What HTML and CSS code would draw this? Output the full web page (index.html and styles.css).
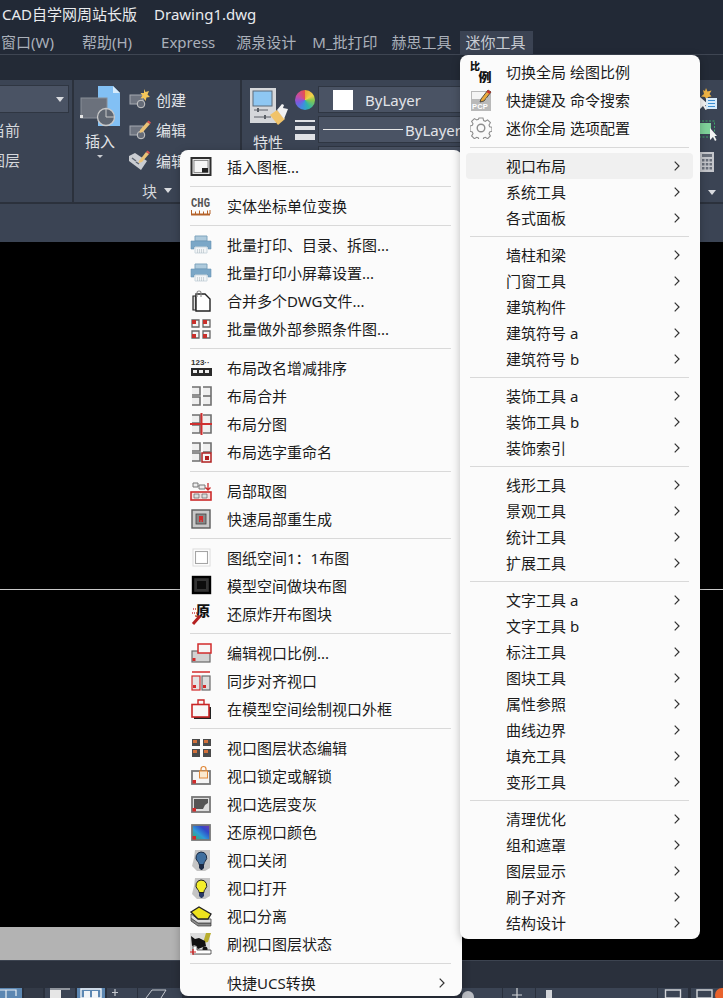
FILE: index.html
```html
<!DOCTYPE html>
<html lang="zh">
<head>
<meta charset="utf-8">
<title>CAD Drawing1.dwg</title>
<link rel="stylesheet" href="styles.css">
</head>
<body>
<svg class="defs" aria-hidden="true">
  <symbol id="chev" viewBox="0 0 6 10"><path d="M.7.7 5 5 .7 9.3" fill="none" stroke="#333" stroke-width="1.2"/></symbol>
  <symbol id="i-gear" viewBox="0 0 22 22"><path d="M9 1h4l.6 2.600 1.700.7 2.300-1.400 2.800 2.800-1.400 2.300.7 1.700 2.300.6v4l-2.300.6-.7 1.700 1.400 2.300-2.800 2.800-2.300-1.400-1.700.7-.6 2.300H9l-.6-2.300-1.700-.7-2.300 1.400-2.800-2.800 1.400-2.300-.7-1.700-2.300-.6V9l2.300-.6.7-1.700-1.400-2.300 2.800-2.800 2.300 1.400 1.700-.7z" fill="#fafafa" stroke="#8d8d8d" stroke-width="1.100"/><circle cx="11" cy="11" r="3.800" fill="none" stroke="#8d8d8d" stroke-width="1.400"/></symbol>

  <symbol id="i-frame" viewBox="0 0 22 22"><rect x="1.500" y="2" width="19" height="17" fill="#e6e6e6" stroke="#2e2e2e" stroke-width="2"/><rect x="4" y="4.500" width="14" height="12" fill="#f5f5f5" stroke="#777" stroke-width=".8"/><rect x="12" y="12" width="6" height="4.500" fill="#222"/></symbol>
  <symbol id="i-print" viewBox="0 0 22 22"><path d="M5 2h12v5H5z" fill="#aecadc" stroke="#7fa4bd"/><path d="M1 7h20v8h-3v-2H4v2H1z" fill="#7ba7c7" stroke="#6a95b6" stroke-width=".6"/><path d="M5 13h12v6H5z" fill="#f2f5f7" stroke="#cdd8df"/><path d="M7 16h8M7 18h8" stroke="#a9b5bd" stroke-dasharray="1 1"/></symbol>
  <symbol id="i-clip" viewBox="0 0 22 22"><path d="M3 6h3v14H3z" fill="#ddd" stroke="#222" stroke-width="1.200"/><path d="M6 4h9l5 5v12H6z" fill="#fff" stroke="#222" stroke-width="1.400"/><path d="M7 7V3a2 2 0 0 1 4 0v4" fill="none" stroke="#888" stroke-width="1.100"/></symbol>
  <symbol id="i-grid" viewBox="0 0 22 22"><path d="M2 2h7v7H2zM13 2h7v7h-7zM2 13h7v7H2zM13 13h7v7h-7z" fill="#f3f3f3" stroke="#666" stroke-width="1.300"/><path d="M2 6h4V2H2zM13 6h4V2h-4zM2 20h4v-4H2zM13 20h4v-4h-4z" fill="#c9302c"/></symbol>
  <symbol id="i-merge2" viewBox="0 0 22 22"><path d="M2 2h8v8H2M13 2h8v18h-8M2 12h8v8H2" fill="#efefef" stroke="#6f6f6f" stroke-width="1.600"/><path d="M13 11h8" stroke="#6f6f6f" stroke-width="1.600"/></symbol>
  <symbol id="i-split" viewBox="0 0 22 22"><path d="M2 2h8v8H2M13 2h8v18h-8M2 12h8v8H2" fill="#efefef" stroke="#6f6f6f" stroke-width="1.600"/><path d="M11.500 0v22M0 11h22" stroke="#cf2f2f" stroke-width="2"/></symbol>
  <symbol id="i-rename" viewBox="0 0 22 22"><path d="M2 2h8v8H2M13 2h8v9h-8M2 12h8v8H2" fill="#efefef" stroke="#6f6f6f" stroke-width="1.600"/><rect x="12" y="12" width="9" height="9" fill="#f6f6f6" stroke="#b02020" stroke-width="1.500"/><rect x="15" y="15" width="4" height="4" fill="#b02020"/></symbol>
  <symbol id="i-part" viewBox="0 0 22 22"><path d="M3 3h5v4H3zM9 5h6v4H9z" fill="#eee" stroke="#777"/><path d="M18 3v7m-2.500-2.500L18 10l2.500-2.500" fill="none" stroke="#cc2b2b" stroke-width="1.300"/><rect x="1" y="12" width="20" height="8" fill="#f4dede" stroke="#cc2b2b" stroke-width="1.600"/><path d="M4 14h5v4H4zM12 14h5v4h-5z" fill="#ddd" stroke="#666" stroke-width=".7"/></symbol>
  <symbol id="i-regen" viewBox="0 0 22 22"><rect x="2" y="2" width="18" height="18" fill="#c9c9c9" stroke="#5c5c5c" stroke-width="1.400"/><rect x="6" y="6" width="10" height="10" fill="#888" stroke="#444" stroke-width=".8"/><path d="M9 8h4v6h-1.500v-2H10.500v2H9z" fill="#d52c2c"/></symbol>
  <symbol id="i-paper" viewBox="0 0 22 22"><rect x="3" y="2" width="17" height="17" fill="#fff" stroke="#dcdcdc"/><rect x="5.500" y="4.500" width="12" height="12" fill="#fff" stroke="#a5a5a5" stroke-width="1.100"/></symbol>
  <symbol id="i-model" viewBox="0 0 22 22"><rect x="3" y="2" width="17" height="16" fill="#333" stroke="#000" stroke-width="2.400"/><rect x="7" y="6" width="9" height="8" fill="#0c0c0c"/></symbol>
  <symbol id="i-scale" viewBox="0 0 22 22"><rect x="2" y="9" width="18" height="11" fill="#d2d2d2" stroke="#6a6a6a" stroke-width="1.200"/><rect x="8" y="2" width="13" height="9" fill="#f7f7f7" stroke="#d22b2b" stroke-width="1.500"/><rect x="2.500" y="16" width="3" height="3" fill="#d22b2b"/></symbol>
  <symbol id="i-sync" viewBox="0 0 22 22"><path d="M2 2h18" stroke="#d22b2b" stroke-width="1.500"/><rect x="2" y="6" width="8" height="14" fill="#e3e3e3" stroke="#d22b2b" stroke-width="1.200"/><rect x="12" y="6" width="8" height="14" fill="#dcdcdc" stroke="#6a6a6a" stroke-width="1.200"/><rect x="3" y="15" width="3" height="3" fill="#d22b2b"/><rect x="13" y="15" width="3" height="3" fill="#d22b2b"/></symbol>
  <symbol id="i-draw" viewBox="0 0 22 22"><path d="M8 7V2h6l0 5" fill="#f8f8f8" stroke="#c92525" stroke-width="1.400"/><path d="M4 9h17v12H4z" fill="#222"/><rect x="2" y="6.500" width="17" height="12.500" fill="#f8f8f8" stroke="#c92525" stroke-width="1.600"/></symbol>
  <symbol id="i-vpgrid" viewBox="0 0 22 22"><path d="M2 2h8v7H2zM13 2h8v7h-8zM2 12h8v8H2zM13 12h8v8h-8z" fill="#4a4a4a"/><path d="M3 3h4v3H3zM14 3h4v3h-4zM3 13h4v3H3zM14 13h4v3h-4z" fill="#d2703a"/></symbol>
  <symbol id="i-vplock" viewBox="0 0 22 22"><rect x="2" y="6" width="18" height="13" fill="#f5f5f5" stroke="#777" stroke-width="1.800"/><rect x="9.500" y="6" width="8" height="7" fill="#fbe9cf" stroke="#e0893a"/><path d="M11 6V4a2.500 2.500 0 0 1 5 0v2" fill="none" stroke="#e0893a" stroke-width="1.200"/><rect x="2.500" y="15" width="3.500" height="3.500" fill="#d22b2b"/></symbol>
  <symbol id="i-vpgray" viewBox="0 0 22 22"><rect x="2" y="4" width="18" height="15" fill="#ddd" stroke="#777" stroke-width="1.800"/><path d="M4 6h14v4l-3 2-2 4H4z" fill="#555"/><rect x="2.500" y="15" width="3.500" height="3.500" fill="#d22b2b"/></symbol>
  <symbol id="i-vpcolor" viewBox="0 0 22 22"><defs><linearGradient id="rb" x1="0" y1="1" x2="1" y2="0"><stop offset="0" stop-color="#35b34a"/><stop offset=".4" stop-color="#2e9bd8"/><stop offset=".7" stop-color="#3048c8"/><stop offset="1" stop-color="#7a35b0"/></linearGradient></defs><rect x="2" y="4" width="18" height="15" fill="url(#rb)" stroke="#777" stroke-width="1.800"/><rect x="2.500" y="15" width="3.500" height="3.500" fill="#d22b2b"/></symbol>
  <symbol id="i-bulboff" viewBox="0 0 22 22"><path d="M5 1h15v18l-5 3H7l-5-5 2-8z" fill="#c4c4c4"/><path d="M11 3a5.500 5.500 0 0 1 4 9.500c-1 1-1 2-1 3H9c0-1-.3-2-1.300-3A5.500 5.500 0 0 1 11 3z" fill="#3f6f9f" stroke="#1b2b44"/><path d="M9 16h5v3l-2 2h-1l-2-2z" fill="#1c2a44"/></symbol>
  <symbol id="i-bulbon" viewBox="0 0 22 22"><path d="M5 1h15v18l-5 3H7l-5-5 2-8z" fill="#c4c4c4"/><path d="M11 3a5.500 5.500 0 0 1 4 9.500c-1 1-1 2-1 3H9c0-1-.3-2-1.300-3A5.500 5.500 0 0 1 11 3z" fill="#f4ee2a" stroke="#222"/><path d="M9 16h5v3l-2 2h-1l-2-2z" fill="#2a3a66"/></symbol>
  <symbol id="i-iso" viewBox="0 0 22 22"><path d="M1 13l7 5h13v3H8l-7-5z" fill="#8a8a8a" stroke="#333" stroke-width=".7"/><path d="M1 9l7 5h13v4H8l-7-5z" fill="#dedede" stroke="#444" stroke-width=".8"/><path d="M1 7 9 2l12 7-3 5H8z" fill="#eee21e" stroke="#222" stroke-width="1.300"/></symbol>
  <symbol id="i-brush" viewBox="0 0 22 22"><path d="M0 0h20v22H0z" fill="#dcdcdc"/><path d="M16 0h5l-3 9-5 1z" fill="#b8ad2e"/><path d="M1 3l4 3 4-1 6 3 1 5-8 3-3-4-3 1z" fill="#111"/><circle cx="15" cy="16" r="2.500" fill="#111"/><path d="M3 21h18v-4H7v-4H3z" fill="#fff" stroke="#222" stroke-width=".7"/><path d="M0 19h6M3 16v6" stroke="#d32020" stroke-width="1.200"/></symbol>
</svg>

<div class="app">
  <div class="titlebar"><span class="t-name">CAD自学网周站长版</span><span>Drawing1.dwg</span></div>
  <nav class="menubar">
    <span class="mi mi-w">窗口(W)</span>
    <span class="mi mi-h">帮助(H)</span>
    <span class="mi mi-e">Express</span>
    <span class="mi mi-y">源泉设计</span>
    <span class="mi mi-m">M_批打印</span>
    <span class="mi">赫思工具</span>
    <span class="mi mi-on">迷你工具</span>
  </nav>
  <div class="tabstrip"></div>
  <div class="ribbon">
    <section class="panel p-layer">
      <div class="combo combo-l"><i class="tri"></i></div>
      <div class="ltxt">当前</div>
      <div class="ltxt">图层</div>
    </section>
    <section class="panel p-block">
      <div class="pbody">
        <div class="insert">
          <svg class="insert-ic" viewBox="0 0 40 42"><path d="M18 1h15l7 7v33H18z" fill="#82c0f4"/><path d="M33 1l7 7h-7z" fill="#d6ebfb"/><rect x="1" y="13" width="26" height="20" fill="#6b717c" stroke="#8a8f98"/><rect x="0" y="30" width="3" height="3" fill="#e4e4e4"/><circle cx="26" cy="32" r="8.500" fill="#5f6671" stroke="#c9c9c9" stroke-width="1.300"/><path d="M26 23.500V32h8.500" fill="none" stroke="#c9c9c9"/></svg>
          <div class="ins-l">插入</div>
          <i class="tri tri-s"></i>
        </div>
        <div class="tools">
          <div class="tool"><svg class="tic" viewBox="0 0 22 22"><rect x="1" y="7" width="13" height="9" fill="#6e7480" stroke="#a4a8af"/><circle cx="12" cy="16" r="3.800" fill="#666c78" stroke="#c9c9c9"/><path d="M15 1l1.500 3 3.500-1-1.500 3.500 2.500 2.500-3.500.5-1 3.500-2-3-3 .5 2-3-2-2.500 3.500 0z" fill="#f4c659"/></svg>创建</div>
          <div class="tool"><svg class="tic" viewBox="0 0 22 22"><rect x="1" y="7" width="13" height="9" fill="#6e7480" stroke="#a4a8af"/><circle cx="12" cy="16" r="3.800" fill="#666c78" stroke="#c9c9c9"/><path d="M11 11 18 3l3 2-7 8-3.500 1z" fill="#eac277"/><path d="M18 3l1.500-1.500 2.500 2-1 1.500z" fill="#d9534f"/></svg>编辑</div>
          <div class="tool"><svg class="tic" viewBox="0 0 22 22"><path d="M0 7l6-3 12 8-6 9-12-9z" fill="#c9ccd1"/><path d="M3 9l4 3M7 13l3 2" stroke="#5f6671" stroke-width="1.500"/><path d="M10 12 17 3l3 2-7 8-3.500 1z" fill="#eac277"/><path d="M17 3l1.500-1.500 2.500 2-1 1.500z" fill="#d9534f"/></svg>编辑</div>
        </div>
      </div>
      <div class="pfoot"><span>块</span><i class="tri"></i></div>
    </section>
    <section class="panel p-prop">
      <div class="special">
        <svg class="prop-ic" viewBox="0 0 40 40"><rect x="1" y="0" width="26" height="35" fill="#d5d7da"/><rect x="4" y="3" width="19" height="15" fill="#8ec7f2" stroke="#5d6a78"/><path d="M5 22h14M5 29h17" stroke="#5a5f66"/><rect x="8" y="20" width="2" height="4" fill="#5a5f66"/><rect x="15" y="27" width="2" height="4" fill="#5a5f66"/><path d="M21 27l7-5 8 9-7 6z" fill="#f0c36a"/><path d="M28 22l5-6 2 1-1 3 5 1-2 5-2 5z" fill="#f2f2f2"/></svg>
        <div class="ins-l">特性</div>
      </div>
      <div class="swatches">
        <div class="wheel"></div>
        <div class="lines"><i class="l1"></i><i class="l2"></i><i class="l3"></i></div>
      </div>
      <div class="combos">
        <div class="combo combo-r"><i class="white"></i><span>ByLayer</span></div>
        <div class="combo combo-r"><i class="dash"></i><span class="by2">ByLayer</span></div>
        <div class="combo combo-r"></div>
      </div>
      <div class="far">
        <svg class="fic" viewBox="0 0 20 22"><path d="M8 0l1.500 3.500 4-1-2 3.500 2 2.500-3.500.5-1.500 3-1.500-3-4-.5 3-2.500L5 2l2 1z" fill="#efb445"/><path d="M2 9v12l3-3 2.500 4 2-1-2.500-4H11z" fill="#f4f4f4"/><rect x="8" y="10" width="11" height="11" fill="#d7ebfa"/><path d="M10 12.500h7M10 15.500h7M10 18.500h7" stroke="#3d8fd1"/></svg>
        <svg class="fic" viewBox="0 0 20 22"><rect x=".5" y="1" width="16" height="16" fill="none" stroke="#3ea76a" stroke-dasharray="2 1.500"/><rect x="2" y="3" width="11" height="11" fill="#7fd39a"/><path d="M12 8v12l3-3 2 4 1.500-1-2-4H19z" fill="#f4f4f4"/></svg>
        <svg class="fic" viewBox="0 0 20 22"><rect x="2" y="0" width="14" height="20" fill="#c4c6cb"/><rect x="4" y="2" width="10" height="3" fill="#6a707b"/><path d="M4 7h2.500v2.500H4zM7.800 7h2.500v2.500H7.800zM11.500 7H14v2.500h-2.500zM4 11h2.500v2.500H4zM7.800 11h2.500v2.500H7.800zM11.500 11H14v2.500h-2.500zM4 15h2.500v2.500H4zM7.800 15h2.500v2.500H7.800zM11.500 15H14v2.500h-2.500z" fill="#6a707b"/></svg>
        <i class="tri"></i>
      </div>
    </section>
  </div>
  <div class="substrip"></div>
  <main class="canvas">
    <div class="axis"></div>
    <div class="hscroll"></div>
  </main>
  <div class="statusbar"></div>
  <div class="buttons">
    <i class="b b1"><svg class="bic" viewBox="0 0 22 10"><path d="M-1 2h7v8M6 2h10v6" fill="none" stroke="#e8eef4" stroke-width="1.200"/></svg></i>
    <i class="b b2"></i>
    <i class="b b3"><svg class="bic" viewBox="0 0 30 10"><path d="M5 1h20" stroke="#e6e6e6"/><path d="M5 2h11v8H5z" fill="#e6e6e6"/></svg></i>
    <i class="b b4"><svg class="bic" viewBox="0 0 28 10"><path d="M4 1h20v9H4z" fill="none" stroke="#f1f4f7" stroke-width="1.400"/><path d="M7 3h6v7H7zM15 3h6v7h-6z" fill="#f1f4f7"/></svg></i>
    <i class="b b5"><svg class="bic" viewBox="0 0 30 10"><path d="M8 1v7M5 4.500h6" stroke="#c5c9cf" stroke-width="1.200"/></svg></i>
    <i class="b b6"><svg class="bic" viewBox="0 0 44 10"><path d="M8 10l6-8h14l-5 8" fill="none" stroke="#c5c9cf"/></svg></i>
    <i class="b b7"><svg class="bic" viewBox="0 0 40 10"><circle cx="6" cy="9" r="6" fill="#b9bcc2"/></svg></i>
    <i class="b b8"><svg class="bic" viewBox="0 0 32 10"><path d="M14 0v10M9 7h10" stroke="#d2d4d8" stroke-width="1.200"/></svg></i>
    <i class="b b9"><svg class="bic" viewBox="0 0 121 10"><path d="M10 2h6v8h-6z" fill="#d2d4d8"/></svg></i>
    <i class="b b10"><svg class="bic" viewBox="0 0 29 10"><path d="M7 2h15v8H7z" fill="none" stroke="#d2d4d8" stroke-width="1.400"/></svg></i>
    <i class="b b11"><svg class="bic" viewBox="0 0 32 10"><path d="M6 2h15v8H6z" fill="none" stroke="#d2d4d8" stroke-width="1.400"/></svg></i>
    <i class="dot"></i>
  </div>
</div>

<div class="menu menu-left">
  <div class="row"><svg class="ic"><use href="#i-frame"/></svg>插入图框...</div>
  <div class="sep"></div>
  <div class="row"><svg class="ic" viewBox="0 0 22 22"><text x="1" y="12" class="g-chg" textLength="19" lengthAdjust="spacingAndGlyphs">CHG</text><path d="M1 19.500h19" stroke="#b4622a" stroke-width="2"/><path d="M1.500 15v4M5.500 16.500V19M9.500 15.500V19M13.500 16.500V19M17.500 15.500V19M20 15v4" stroke="#b4622a" stroke-width="1"/></svg>实体坐标单位变换</div>
  <div class="sep"></div>
  <div class="row"><svg class="ic"><use href="#i-print"/></svg>批量打印、目录、拆图...</div>
  <div class="row"><svg class="ic"><use href="#i-print"/></svg>批量打印小屏幕设置...</div>
  <div class="row"><svg class="ic"><use href="#i-clip"/></svg>合并多个DWG文件...</div>
  <div class="row"><svg class="ic"><use href="#i-grid"/></svg>批量做外部参照条件图...</div>
  <div class="sep"></div>
  <div class="row"><svg class="ic" viewBox="0 0 22 22"><text x="1" y="8" class="g-123">123··</text><path d="M1 11h21v8H1z" fill="#2a2a2a"/><path d="M3 13h4v3H3zM9 13h4v3H9zM15 13h4v3h-4z" fill="#eee"/></svg>布局改名增减排序</div>
  <div class="row"><svg class="ic"><use href="#i-merge2"/></svg>布局合并</div>
  <div class="row"><svg class="ic"><use href="#i-split"/></svg>布局分图</div>
  <div class="row"><svg class="ic"><use href="#i-rename"/></svg>布局选字重命名</div>
  <div class="sep"></div>
  <div class="row"><svg class="ic"><use href="#i-part"/></svg>局部取图</div>
  <div class="row"><svg class="ic"><use href="#i-regen"/></svg>快速局部重生成</div>
  <div class="sep"></div>
  <div class="row"><svg class="ic"><use href="#i-paper"/></svg>图纸空间1：1布图</div>
  <div class="row"><svg class="ic"><use href="#i-model"/></svg>模型空间做块布图</div>
  <div class="row"><svg class="ic" viewBox="0 0 22 22"><text x="6" y="13" class="g-yuan">原</text><path d="M3 21 10 13" stroke="#b41f1f" stroke-width="3"/><path d="M2 10h5M3 6h3M5 13h3" stroke="#c44" stroke-width="1.500" stroke-dasharray="1 1"/></svg>还原炸开布图块</div>
  <div class="sep"></div>
  <div class="row"><svg class="ic"><use href="#i-scale"/></svg>编辑视口比例...</div>
  <div class="row"><svg class="ic"><use href="#i-sync"/></svg>同步对齐视口</div>
  <div class="row"><svg class="ic"><use href="#i-draw"/></svg>在模型空间绘制视口外框</div>
  <div class="sep"></div>
  <div class="row"><svg class="ic"><use href="#i-vpgrid"/></svg>视口图层状态编辑</div>
  <div class="row"><svg class="ic"><use href="#i-vplock"/></svg>视口锁定或解锁</div>
  <div class="row"><svg class="ic"><use href="#i-vpgray"/></svg>视口选层变灰</div>
  <div class="row"><svg class="ic"><use href="#i-vpcolor"/></svg>还原视口颜色</div>
  <div class="row"><svg class="ic"><use href="#i-bulboff"/></svg>视口关闭</div>
  <div class="row"><svg class="ic"><use href="#i-bulbon"/></svg>视口打开</div>
  <div class="row"><svg class="ic"><use href="#i-iso"/></svg>视口分离</div>
  <div class="row"><svg class="ic"><use href="#i-brush"/></svg>刷视口图层状态</div>
  <div class="sep"></div>
  <div class="row"><span class="ic"></span>快捷UCS转换<svg class="chev"><use href="#chev"/></svg></div>
</div>

<div class="menu menu-right">
  <div class="row"><svg class="ic" viewBox="0 0 22 22"><text x="0" y="9" class="g-b">比</text><text x="8.500" y="21" class="g-b2">例</text></svg>切换全局 绘图比例</div>
  <div class="row"><svg class="ic" viewBox="0 0 22 22"><path d="M1 2h15l5 0v20H1z" fill="#b9b9b9"/><path d="M2 3h15v7H2z" fill="#f4f4f4"/><path d="M11 10 18 1l3 2-7 9-4 1z" fill="#e9a93c" stroke="#333" stroke-width=".8"/><path d="M18 1l3 2-1.500 2-3-2z" fill="#c8332c"/><text x="2" y="20" class="g-pcp">PCP</text></svg>快捷键及 命令搜索</div>
  <div class="row"><svg class="ic"><use href="#i-gear"/></svg>迷你全局 选项配置</div>
  <div class="sep sep-t"></div>
  <div class="row sub hot"><span class="ic"></span>视口布局<svg class="chev"><use href="#chev"/></svg></div>
  <div class="row sub"><span class="ic"></span>系统工具<svg class="chev"><use href="#chev"/></svg></div>
  <div class="row sub"><span class="ic"></span>各式面板<svg class="chev"><use href="#chev"/></svg></div>
  <div class="sep"></div>
  <div class="row sub"><span class="ic"></span>墙柱和梁<svg class="chev"><use href="#chev"/></svg></div>
  <div class="row sub"><span class="ic"></span>门窗工具<svg class="chev"><use href="#chev"/></svg></div>
  <div class="row sub"><span class="ic"></span>建筑构件<svg class="chev"><use href="#chev"/></svg></div>
  <div class="row sub"><span class="ic"></span>建筑符号 a<svg class="chev"><use href="#chev"/></svg></div>
  <div class="row sub"><span class="ic"></span>建筑符号 b<svg class="chev"><use href="#chev"/></svg></div>
  <div class="sep"></div>
  <div class="row sub"><span class="ic"></span>装饰工具 a<svg class="chev"><use href="#chev"/></svg></div>
  <div class="row sub"><span class="ic"></span>装饰工具 b<svg class="chev"><use href="#chev"/></svg></div>
  <div class="row sub"><span class="ic"></span>装饰索引<svg class="chev"><use href="#chev"/></svg></div>
  <div class="sep"></div>
  <div class="row sub"><span class="ic"></span>线形工具<svg class="chev"><use href="#chev"/></svg></div>
  <div class="row sub"><span class="ic"></span>景观工具<svg class="chev"><use href="#chev"/></svg></div>
  <div class="row sub"><span class="ic"></span>统计工具<svg class="chev"><use href="#chev"/></svg></div>
  <div class="row sub"><span class="ic"></span>扩展工具<svg class="chev"><use href="#chev"/></svg></div>
  <div class="sep"></div>
  <div class="row sub"><span class="ic"></span>文字工具 a<svg class="chev"><use href="#chev"/></svg></div>
  <div class="row sub"><span class="ic"></span>文字工具 b<svg class="chev"><use href="#chev"/></svg></div>
  <div class="row sub"><span class="ic"></span>标注工具<svg class="chev"><use href="#chev"/></svg></div>
  <div class="row sub"><span class="ic"></span>图块工具<svg class="chev"><use href="#chev"/></svg></div>
  <div class="row sub"><span class="ic"></span>属性参照<svg class="chev"><use href="#chev"/></svg></div>
  <div class="row sub"><span class="ic"></span>曲线边界<svg class="chev"><use href="#chev"/></svg></div>
  <div class="row sub"><span class="ic"></span>填充工具<svg class="chev"><use href="#chev"/></svg></div>
  <div class="row sub"><span class="ic"></span>变形工具<svg class="chev"><use href="#chev"/></svg></div>
  <div class="sep"></div>
  <div class="row sub"><span class="ic"></span>清理优化<svg class="chev"><use href="#chev"/></svg></div>
  <div class="row sub"><span class="ic"></span>组和遮罩<svg class="chev"><use href="#chev"/></svg></div>
  <div class="row sub"><span class="ic"></span>图层显示<svg class="chev"><use href="#chev"/></svg></div>
  <div class="row sub"><span class="ic"></span>刷子对齐<svg class="chev"><use href="#chev"/></svg></div>
  <div class="row sub"><span class="ic"></span>结构设计<svg class="chev"><use href="#chev"/></svg></div>
</div>
</body>
</html>
```

FILE: styles.css
```css
* { box-sizing: border-box; }
html, body { margin: 0; height: 998px; overflow: hidden; background: #000; }
body { font-family: "Noto Sans", "Noto Sans CJK SC", sans-serif; font-size: 15px; }
.defs { position: absolute; width: 0; height: 0; }
.g-b, .g-b2 { font-family: "Noto Sans CJK SC", sans-serif; font-weight: 900; fill: #111; }
.g-b { font-size: 10px; }
.g-b2 { font-size: 13px; }
.g-pcp { font-family: "Liberation Sans", sans-serif; font-size: 7.500px; font-weight: 700; fill: #fff; letter-spacing: .2px; }
.g-chg { font-family: "Liberation Mono", monospace; font-size: 13px; fill: #555; font-weight: 700; }
.g-123 { font-family: "Liberation Sans", sans-serif; font-size: 8px; fill: #333; font-weight: 700; }
.g-yuan { font-family: "Noto Sans CJK SC", sans-serif; font-size: 14px; font-weight: 900; fill: #111; }

.app { width: 723px; height: 998px; display: flex; flex-direction: column; overflow: hidden; }
.titlebar { height: 28px; flex: none; background: #222936; color: #e9ebee; padding: 2px 0 0 2px; line-height: 25px; display: flex; gap: 17px; white-space: nowrap; }
.menubar { height: 27px; flex: none; background: #222936; border-bottom: 1px solid #3e4552; color: #aab0ba; display: flex; align-items: flex-start; white-space: nowrap; padding-left: 0; }
.mi { padding: 0 7px; height: 26px; line-height: 28px; }
.mi-w { margin-left: -6px; }
.mi-h { margin-left: 14px; }
.mi-e { margin-left: 15px; }
.mi-y { margin-left: 7px; padding-right: 8px; }
.mi-m { padding-left: 8px; }
.mi-on { background: #3b4353; color: #c8ccd3; margin-left: 1px; width: 73px; height: 26px; padding: 0 6px; margin-top: 3px; line-height: 23px; }
.tabstrip { height: 25px; flex: none; background: #232a36; }

.ribbon { height: 124px; flex: none; background: #3b4454; border-bottom: 2px solid #2b313c; display: flex; color: #e2e4e8; }
.panel { height: 122px; border-right: 2px solid #2b313c; }
.p-layer { width: 74px; padding: 5px 3px 0 0; display: flex; flex-direction: column; align-items: flex-end; overflow: hidden; }
.combo { background: #4a5364; border: 1px solid #2f3642; }
.combo-l { width: 71px; height: 28px; flex: none; position: relative; display: flex; align-items: center; justify-content: flex-end; padding-right: 4px; }
.ltxt { width: 30px; flex: none; height: 31px; margin-right: 49px; line-height: 34px; white-space: nowrap; color: #d5d8dc; }
.ltxt + .ltxt { line-height: 30px; margin-top: 1px; }
.tri { display: block; width: 0; height: 0; border: 4.500px solid transparent; border-bottom: 0; border-top: 5px solid #d9dbdf; }
.tri-s { border-width: 3px 3px 0; border-top-color: #c9ccd1; margin: 1px auto 0; }

.p-block { width: 168px; display: flex; flex-direction: column; }
.pbody { flex: 1; display: flex; padding: 5px 0 0 0; }
.insert { width: 52px; margin-right: 3px; display: flex; flex-direction: column; align-items: center; }
.insert-ic { width: 40px; height: 42px; flex: none; }
.ins-l { line-height: 26px; margin-top: 1px; }
.tools { display: flex; flex-direction: column; margin-top: -1px; }
.tool { display: flex; align-items: center; gap: 5px; height: 30.500px; white-space: nowrap; }
.tic { width: 22px; height: 22px; flex: none; }
.pfoot { height: 23px; display: flex; align-items: center; justify-content: center; gap: 7px; padding: 0 0 1px 0; color: #d5d8dc; }

.p-prop { flex: 1; border-right: 0; display: flex; padding-left: 7px; }
.special { width: 46px; padding-top: 8px; display: flex; flex-direction: column; align-items: flex-start; }
.prop-ic { width: 40px; height: 40px; flex: none; }
.special .ins-l { margin: 1px 0 0 4px; }
.swatches { width: 23px; padding-top: 10px; display: flex; flex-direction: column; gap: 10px; flex: none; }
.wheel { width: 20px; height: 20px; border-radius: 50%; background: conic-gradient(#e9a23b, #f2d34a 16%, #8cc84b 25%, #2fb4a8 42%, #3c8fe0 55%, #7a5ae0 70%, #c14ca8 82%, #e8504c); }
.lines { width: 20px; display: flex; flex-direction: column; gap: 4px; }
.lines i { display: block; background: #dfe1e5; }
.l1 { height: 2px; } .l2 { height: 4px; } .l3 { height: 6px; }
.combos { width: 146px; flex: none; padding-top: 6px; display: flex; flex-direction: column; gap: 3px; }
.combo-r { height: 27px; display: flex; align-items: center; padding-left: 14px; color: #e2e4e8; white-space: nowrap; }
.white { display: block; width: 20px; height: 20px; background: #fff; margin-right: 12px; flex: none; }
.dash { display: block; width: 80px; height: 1px; background: #e6e6e6; margin: 0 2px 0 -10px; flex: none; }
.far { margin-left: auto; width: 25px; height: 122px; padding-top: 8px; display: flex; flex-direction: column; gap: 10px; align-items: flex-start; flex: none; }
.fic { width: 20px; height: 22px; flex: none; }
.far .tri { margin: 6px 0 0 10px; }

.substrip { height: 38px; flex: none; background: #3b4454; }
.canvas { flex: 1; background: #000; display: flex; flex-direction: column; }
.axis { height: 1px; margin-top: 347px; background: #c9c9c9; flex: none; }
.hscroll { margin-top: auto; height: 33px; width: 300px; background: #b3b3b3; flex: none; }
.statusbar { height: 28px; flex: none; background: #2a303c; border-top: 1px solid #3c4350; }
.buttons { height: 10px; flex: none; background: #2a303c; display: flex; position: relative; overflow: hidden; }
.b { display: block; height: 10px; background: #3b4454; flex: none; }
.bic { display: block; width: 100%; height: 10px; }
.b1 { width: 22px; background: #5c87b2; }
.b2 { width: 19px; margin-left: 2px; background: #333a47; }
.b3 { width: 30px; margin-left: 2px; }
.b4 { width: 28px; margin-left: 2px; background: #5c87b2; }
.b5 { width: 30px; margin-left: 2px; }
.b6 { width: 44px; margin-left: 1px; }
.b7 { width: 40px; margin-left: 280px; }
.b8 { width: 32px; margin-left: 1px; }
.b9 { width: 121px; margin-left: 1px; }
.b10 { width: 30px; margin-left: 1px; }
.b11 { width: 32px; margin-left: 3px; }
.dot { position: absolute; right: -6px; top: 0; width: 14px; height: 14px; border-radius: 50%; background: #e8622c; }

.menu { position: absolute; background: #fbfbfb; border-radius: 8px; color: #1b1b1b; box-shadow: 0 2px 8px rgba(0,0,0,.25); }
.menu-left { left: 180px; top: 150px; width: 282px; height: 846px; padding: 3px 6px 0 10px; }
.menu-right { left: 460px; top: 55px; width: 240px; height: 884px; padding: 3px 0 0; }
.row { height: 28px; display: flex; align-items: center; white-space: nowrap; line-height: 28px; }
.ic { width: 22px; height: 22px; flex: none; margin-right: 15px; display: block; }
.menu-right .row { margin: 0 7px 0 6px; padding: 0 13px 0 4px; }
.menu-right .ic { margin-right: 14px; }
.menu-right .row.sub { height: 26px; border-radius: 4px; }
.hot { background: #f0f0f0; }
.chev { width: 6px; height: 10px; margin-left: auto; flex: none; }
.menu-left .chev { margin-right: 11px; }
.sep { height: 11px; display: flex; align-items: center; }
.sep::before { content: ""; display: block; width: 100%; height: 1px; background: #d9d9d9; margin-top: -1px; }
.menu-left .sep { padding-right: 5px; }
.menu-right .sep { margin: 0 11px 0 10px; }
```
